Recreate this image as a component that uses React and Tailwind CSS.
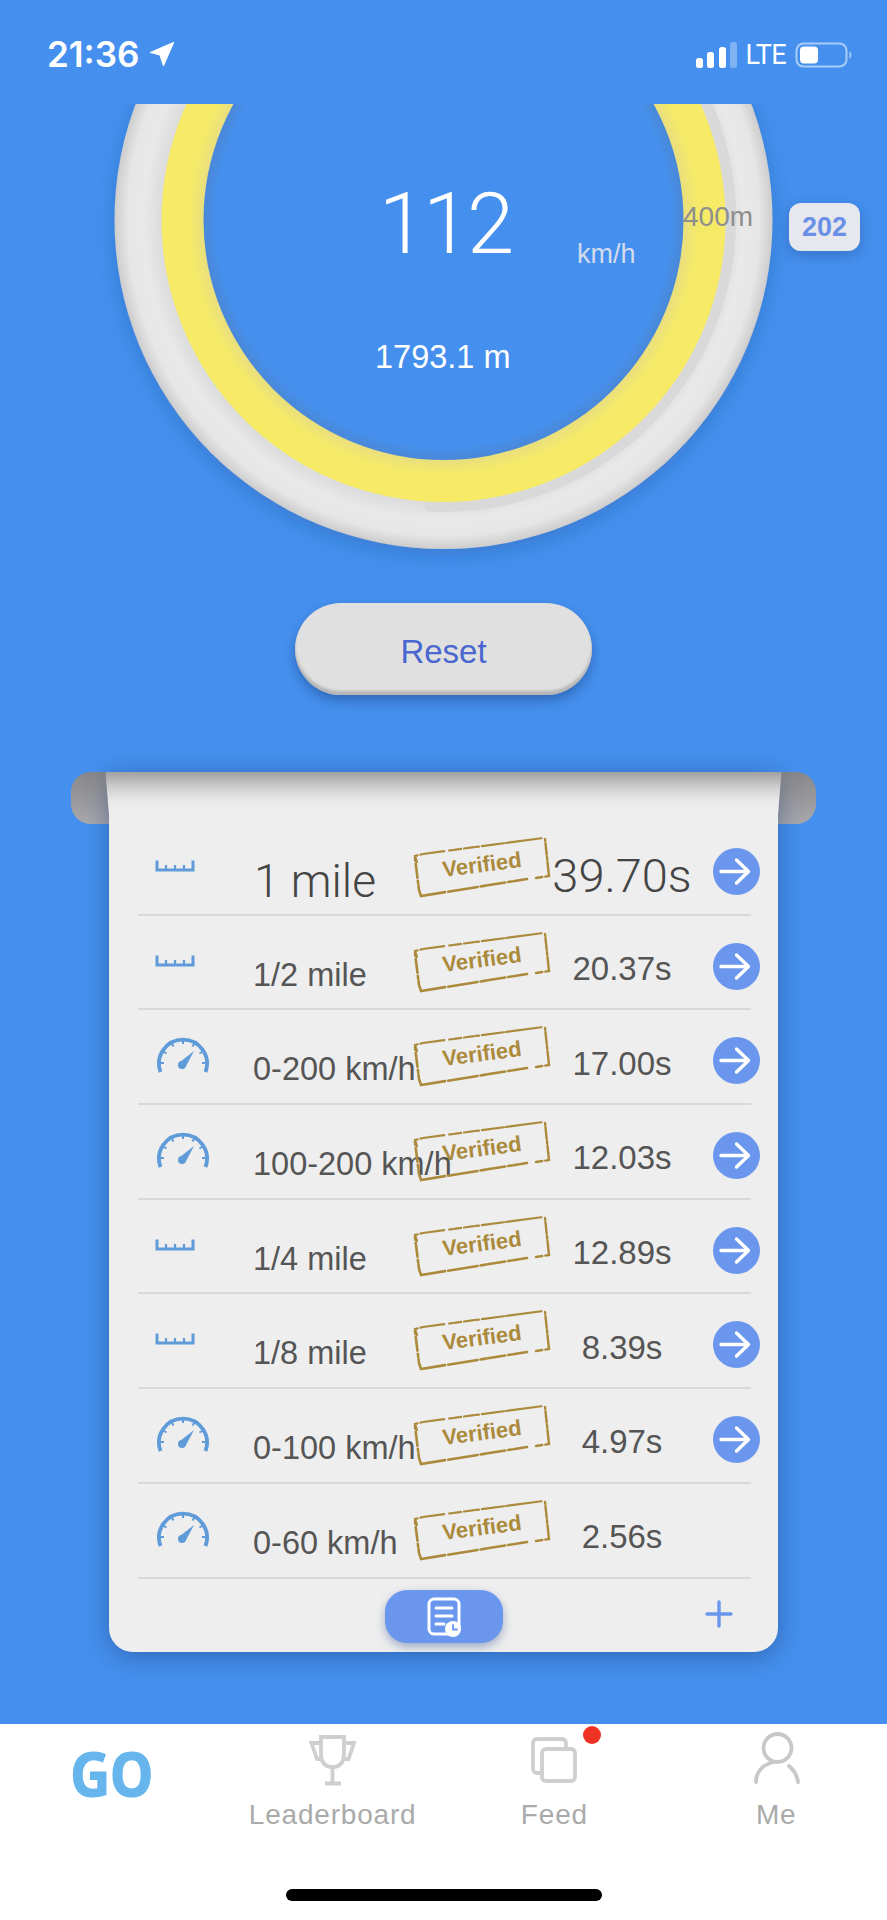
import React from "react";

const rows = [
  { icon: "ruler", name: "1 mile", time: "39.70s", arrow: true, big: true },
  { icon: "ruler", name: "1/2 mile", time: "20.37s", arrow: true },
  { icon: "gauge", name: "0-200 km/h", time: "17.00s", arrow: true },
  { icon: "gauge", name: "100-200 km/h", time: "12.03s", arrow: true },
  { icon: "ruler", name: "1/4 mile", time: "12.89s", arrow: true },
  { icon: "ruler", name: "1/8 mile", time: "8.39s", arrow: true },
  { icon: "gauge", name: "0-100 km/h", time: "4.97s", arrow: true },
  { icon: "gauge", name: "0-60 km/h", time: "2.56s" },
];

function StatusBar() {
  return (
    <div className="relative z-10 flex h-[104px] items-start justify-between bg-[#4590ee] pl-[47px] pr-[34px] pt-[35px] text-white">
      <div className="flex items-center gap-[10px]">
        <span className="font-['Inter',sans-serif] text-[35px] font-semibold leading-[38px]">21:36</span>
        <svg width="26" height="26" viewBox="0 0 26 26" fill="white" stroke="white" strokeWidth="1.2" strokeLinejoin="round">
          <path d="M24.5 1.5 L1.5 11.5 L11 14 L14.5 24.5 Z" />
        </svg>
      </div>
      <div className="flex items-center pt-[5px]">
        <svg width="41" height="26" viewBox="0 0 41 26" fill="white">
          <rect x="0" y="16" width="7" height="10" rx="2.5" />
          <rect x="11" y="10" width="7" height="16" rx="2.5" />
          <rect x="23" y="5" width="7" height="21" rx="2.5" />
          <rect x="34" y="0" width="7" height="26" rx="2.5" fill="#7fb2f3" />
        </svg>
        <span className="ml-[8px] font-['Roboto',sans-serif] text-[27px] leading-[30px] tracking-[-0.6px]">LTE</span>
        <svg className="ml-[9px]" width="58" height="26" viewBox="0 0 58 26">
          <rect x="1.5" y="1.5" width="50" height="23" rx="7" fill="none" stroke="#a9ccf7" strokeWidth="2" />
          <rect x="5" y="4.5" width="18" height="17" rx="4" fill="white" />
          <path d="M54.5 9 C57 10.5 57 15.5 54.5 17 Z" fill="#a9ccf7" />
        </svg>
      </div>
    </div>
  );
}

function Dial() {
  return (
    <svg className="block overflow-visible" width="887" height="447" viewBox="0 104 887 447">
      <defs>
        <radialGradient id="ringFill" gradientUnits="userSpaceOnUse" cx="443.5" cy="220" r="329">
          <stop offset="0.85" stopColor="#d9d9d9" />
          <stop offset="0.91" stopColor="#e9e9e9" />
          <stop offset="0.96" stopColor="#e6e6e6" />
          <stop offset="1" stopColor="#cdcdcd" />
        </radialGradient>
        <radialGradient id="yellowFill" gradientUnits="userSpaceOnUse" cx="443.5" cy="220" r="282">
          <stop offset="0.84" stopColor="#e6dc84" />
          <stop offset="0.9" stopColor="#f5ea68" />
          <stop offset="1" stopColor="#f6ea66" />
        </radialGradient>
        <radialGradient id="innerFill" gradientUnits="userSpaceOnUse" cx="443.5" cy="220" r="240">
          <stop offset="0.94" stopColor="#4590ee" />
          <stop offset="1" stopColor="#4a88d8" />
        </radialGradient>
        <filter id="ringShadow" x="-20%" y="-20%" width="140%" height="140%">
          <feDropShadow dx="0" dy="6" stdDeviation="10" floodColor="#1d4f99" floodOpacity="0.35" />
        </filter>
      </defs>
      <circle cx="443.5" cy="220" r="329" fill="url(#ringFill)" filter="url(#ringShadow)" />
      <path d="M430 506 A287 287 0 0 0 640 10" fill="none" stroke="#d9d9d9" strokeWidth="11" strokeLinecap="round" />
      <circle cx="443.5" cy="220" r="282" fill="url(#yellowFill)" />
      <circle cx="443.5" cy="220" r="240" fill="url(#innerFill)" />
    </svg>
  );
}

function Stamp() {
  return (
    <div className="absolute left-[273px] top-[11px] h-[70px] w-[142px]">
      <svg className="absolute inset-0" width="142" height="70" viewBox="0 0 142 70" fill="none" stroke="#ab8a3c" strokeLinecap="round">
        <path d="M6 30 L4 24 L12 22 L132 6" strokeWidth="2.2" strokeDasharray="9 3 24 5 3 2 7 3 10 2 3 3 22 2 36 2" />
        <path d="M134 7 L138 44 L125 46" strokeWidth="2.4" strokeDasharray="2 2 12 2 3 2 18 3 8 6" />
        <path d="M116 47 L10 64 L8 58 L4 26" strokeWidth="2.6" strokeDasharray="14 2 3 3 18 2 5 3 30 3 26 1 8 2 3 3 14 3 6 2 10" />
      </svg>
      <span className="absolute left-0 right-0 top-[20px] rotate-[-7.4deg] text-center font-['Liberation_Sans',sans-serif] text-[22px] font-bold leading-[26px] text-[#ab8a3c]">
        Verified
      </span>
    </div>
  );
}

function RulerIcon() {
  return (
    <svg width="40" height="14" viewBox="0 0 40 14" fill="none" stroke="#5e9bd8" className="ml-[17px] mt-[38px]">
      <path d="M2 1.5 V11 H38 V1.5" strokeWidth="3" />
      <path d="M11 6 V11 M20 6 V11 M29 6 V11" strokeWidth="2.2" />
    </svg>
  );
}

function GaugeIcon() {
  const ticks = [180, 210, 240, 270, 300, 330, 360];
  return (
    <svg width="56" height="42" viewBox="0 0 56 42" fill="none" stroke="#5e9bd8" className="ml-[17px] mt-[25px]">
      <path d="M5.5 37 A24 24 0 1 1 50.5 37" strokeWidth="3.8" />
      {ticks.map((a) => {
        const r = (a * Math.PI) / 180;
        return (
          <line
            key={a}
            x1={28 + 24 * Math.cos(r)}
            y1={28 + 24 * Math.sin(r)}
            x2={28 + 19 * Math.cos(r)}
            y2={28 + 19 * Math.sin(r)}
            strokeWidth="2"
          />
        );
      })}
      <path d="M25 27 L39 16 L30.5 32 Z" fill="#5e9bd8" stroke="none" />
      <circle cx="27" cy="30" r="4" fill="#5e9bd8" stroke="none" />
    </svg>
  );
}

function ArrowBtn() {
  return (
    <div className="ml-[7px] mt-[8px] h-[47px] w-[47px] shrink-0 rounded-full bg-[#6a96ee]">
      <svg width="47" height="47" viewBox="0 0 47 47" fill="none" stroke="white" strokeWidth="3.4" strokeLinecap="round" strokeLinejoin="round">
        <path d="M8 23.5 H35.5 M23.5 12 L35.5 23.5 L23.5 35" />
      </svg>
    </div>
  );
}

function Row({ row }) {
  return (
    <div className="relative flex h-[94.7px] items-center border-b-2 border-[#d8d8d8] font-['Liberation_Sans',sans-serif] text-[#555]">
      <div className="h-full w-[115px] shrink-0">
        {row.icon === "ruler" ? <RulerIcon /> : <GaugeIcon />}
      </div>
      <div
        className={
          row.big
            ? "mt-[27px] w-[285px] shrink-0 whitespace-nowrap pl-[1px] font-['Roboto',sans-serif] text-[46px] font-light leading-[50px] text-[#444]"
            : "mt-[25px] w-[285px] shrink-0 whitespace-nowrap text-[32.5px] leading-[38px]"
        }
      >
        {row.name}
      </div>
      <div
        className={
          row.big
            ? "mt-[18px] w-[168px] shrink-0 text-center font-['Roboto',sans-serif] text-[47px] font-light leading-[50px] text-[#444]"
            : "mt-[14px] w-[168px] shrink-0 text-center text-[33px] leading-[38px]"
        }
      >
        {row.time}
      </div>
      {row.arrow && <ArrowBtn />}
      <Stamp />
    </div>
  );
}

function Paper() {
  return (
    <div className="relative mx-auto mt-[77px] w-[745px]">
      <div className="absolute left-0 right-0 top-0 h-[52px] rounded-[20px] bg-gradient-to-b from-[#88888a] to-[#a9a9ad]" />
      <div className="relative mx-auto w-[669px] rounded-b-[24px] bg-[#eeeeee] shadow-[0_4px_26px_rgba(20,50,110,0.45)]">
        <div className="relative -mx-[3.5px] h-[49px] bg-[linear-gradient(to_bottom,#a0a0a0_0%,#cfcfcf_32%,#e8e8e8_58%,#eeeeee_75%)] [clip-path:polygon(0_0,100%_0,calc(100%-4px)_100%,4px_100%)]" />
        <div className="pl-[29px] pr-[27px]">
          {rows.map((r) => (
            <Row key={r.name} row={r} />
          ))}
        </div>
        <div className="relative flex h-[73px] items-start justify-center pt-[11px]">
          <div className="flex h-[53px] w-[118px] items-center justify-center rounded-[22px] bg-[#6a96ee] shadow-[0_4px_10px_rgba(40,70,140,0.4)]">
            <svg width="44" height="44" viewBox="0 0 44 44" fill="none" stroke="white" strokeWidth="3" strokeLinecap="round">
              <rect x="7" y="5" width="30" height="35" rx="5" />
              <path d="M14 14 H30 M14 22 H30 M14 30 H22" />
              <circle cx="31" cy="35" r="8" fill="white" stroke="none" />
              <path d="M31 31 V35.5 H35" stroke="#6a96ee" strokeWidth="1.8" />
            </svg>
          </div>
          <svg className="absolute right-[45px] top-[21px]" width="28" height="28" viewBox="0 0 28 28" stroke="#6a96ee" strokeWidth="3.4" strokeLinecap="round">
            <path d="M14 2 V26 M2 14 H26" />
          </svg>
        </div>
      </div>
    </div>
  );
}

function Trophy() {
  return (
    <svg className="ml-[5px]" width="90" height="70" viewBox="0 0 90 70" fill="none" stroke="#cfcfcf" strokeWidth="3.8">
      <path d="M31 12 H54 V28 Q54 42 42.5 42 Q31 42 31 28 Z" />
      <path d="M31 18 H21.5 L27 34 H32 M54 18 H64 L58.5 34 H53" />
      <path d="M42.5 42 V58 M35 58.5 H51" />
    </svg>
  );
}

function Feed() {
  return (
    <svg className="ml-[12px]" width="100" height="70" viewBox="0 0 100 70" fill="none" stroke="#cfcfcf" strokeWidth="3.8">
      <path d="M31 48 H27 A4 4 0 0 1 23 44 V18 A4 4 0 0 1 27 14 H52 A4 4 0 0 1 56 18 V23" />
      <rect x="32" y="24" width="33" height="32" rx="4" />
      <circle cx="82" cy="10" r="9" fill="#ee3324" stroke="none" />
    </svg>
  );
}

function Person() {
  return (
    <svg width="90" height="70" viewBox="0 0 90 70" fill="none" stroke="#c8c8c8" strokeWidth="3.8" strokeLinecap="round">
      <circle cx="46.5" cy="23" r="14" />
      <path d="M25 57 C25 47 32 39 43 37 M58 41 C63 45 66 50 67 57" />
    </svg>
  );
}

function TabBar() {
  const label = "mt-[4px] font-['Liberation_Sans',sans-serif] text-[28px] leading-[32px] tracking-[0.8px] text-[#aaaaaa]";
  return (
    <div className="mt-auto h-[196px] bg-white">
      <div className="grid h-[128px] grid-cols-4">
        <div className="flex justify-center pt-[12px]">
          <span className="scale-x-[0.9] font-['Noto_Sans',sans-serif] text-[62px] font-extrabold leading-[74px] tracking-[-1px] text-[#66b5ec]">GO</span>
        </div>
        <div className="flex flex-col items-center pt-[1px]">
          <Trophy />
          <span className={label}>Leaderboard</span>
        </div>
        <div className="flex flex-col items-center pt-[1px]">
          <Feed />
          <span className={label}>Feed</span>
        </div>
        <div className="flex flex-col items-center pt-[1px]">
          <Person />
          <span className={label}>Me</span>
        </div>
      </div>
      <div className="mx-auto mt-[37px] h-[12px] w-[316px] rounded-full bg-black" />
    </div>
  );
}

export default function App() {
  return (
    <div className="flex h-[1920px] w-[887px] flex-col overflow-hidden bg-[#4590ee]">
      <StatusBar />
      <div className="relative h-[447px] shrink-0">
        <Dial />
        <span className="absolute left-[371px] top-[70px] w-[148px] text-center font-['Roboto',sans-serif] text-[85px] font-light leading-[100px] tracking-[-3px] text-white">112</span>
        <span className="absolute left-[577px] top-[135px] font-['Liberation_Sans',sans-serif] text-[27px] leading-[30px] text-[#d3dcec]">km/h</span>
        <span className="absolute left-[375px] top-[235px] font-['Liberation_Sans',sans-serif] text-[32.5px] leading-[36px] text-white">1793.1 m</span>
        <span className="absolute left-[683px] top-[98px] font-['Liberation_Sans',sans-serif] text-[28px] leading-[30px] text-[#8e8e8e]">400m</span>
        <div className="absolute left-[789px] top-[99px] flex h-[48px] w-[71px] items-center justify-center rounded-[12px] bg-[#e6e8ee] font-['Liberation_Sans',sans-serif] text-[27px] font-bold text-[#6a8fe6] shadow-[0_4px_14px_rgba(30,60,130,0.35)]">
          202
        </div>
      </div>
      <button className="mx-auto mt-[52px] h-[92px] w-[297px] shrink-0 rounded-[46px] bg-[#e0e0e0] pt-[5px] font-['Liberation_Sans',sans-serif] text-[33px] text-[#4a66cf] shadow-[inset_0_-4px_3px_#b4b4b4,0_6px_12px_rgba(20,50,110,0.4)]">
        Reset
      </button>
      <Paper />
      <TabBar />
    </div>
  );
}
